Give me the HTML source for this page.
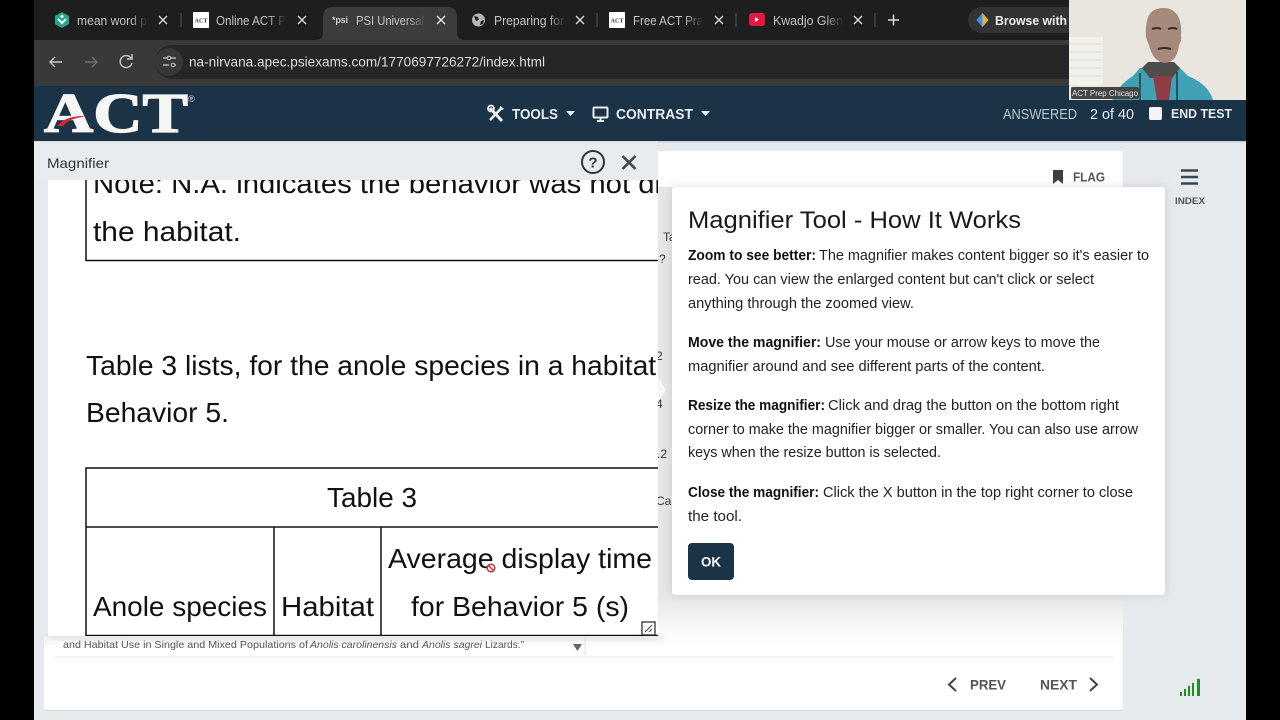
<!DOCTYPE html>
<html lang="en"><head><meta charset="utf-8"><title>ACT Magnifier</title>
<style>
html,body{margin:0;padding:0;background:#000;width:1280px;height:720px;overflow:hidden}
svg{display:block}
text{font-family:"Liberation Sans",sans-serif;white-space:pre}
.d{font-size:14.5px;fill:#222}
.b{font-size:14.5px;fill:#111;font-weight:bold}
.m{font-size:28px;fill:#111}
.t{font-size:12.5px;fill:#c4c4c4}
.x{stroke:#ddd;stroke-width:1.3;fill:none}
.sep{stroke:#444;stroke-width:1.5}
.f{font-size:10.5px;fill:#555}
.n{font-size:14px;font-weight:bold;fill:#555}
.h{font-size:14.5px;font-weight:bold;fill:#e8edf0}
</style></head><body>
<svg width="1280" height="720" viewBox="0 0 1280 720" xmlns="http://www.w3.org/2000/svg">
<defs>
<clipPath id="mag"><rect x="48" y="180" width="610" height="456"/></clipPath>
<filter id="sh" x="-10%" y="-10%" width="120%" height="120%"><feGaussianBlur stdDeviation="5"/></filter>
<linearGradient id="fade" x1="0" x2="1"><stop offset="0" stop-color="#1e1e1e" stop-opacity="0"/><stop offset="1" stop-color="#1e1e1e"/></linearGradient>
<linearGradient id="fadeA" x1="0" x2="1"><stop offset="0" stop-color="#3c3c3c" stop-opacity="0"/><stop offset="1" stop-color="#3c3c3c"/></linearGradient>
<linearGradient id="under" x1="0" x2="0" y1="0" y2="1"><stop offset="0" stop-color="#e6e7e8"/><stop offset="1" stop-color="#fff"/></linearGradient>
</defs>
<rect width="1280" height="720" fill="#000"/>
<!-- tab strip -->
<rect x="34" y="0" width="1212" height="40" fill="#1e1e1e"/>
<path d="M315 40q8 0 8-8V17q0-10 10-10h114q10 0 10 10v15q0 8 8 8z" fill="#3c3c3c"/>
<!-- tab 1 -->
<path d="M62 12l7 4v8l-7 4-7-4v-8z" fill="#1fa88a"/><path d="M58 19l4 4 4-4" stroke="#fff" stroke-width="2" fill="none"/><circle cx="62" cy="16.500" r="1.500" fill="#fff"/>
<text class="t" x="77" y="25" textLength="70" lengthAdjust="spacingAndGlyphs">mean word p</text>
<rect x="130" y="8" width="18" height="24" fill="url(#fade)"/>
<path class="x" d="M159 16l8 8m0-8l-8 8"/><line class="sep" x1="181" y1="13" x2="181" y2="27"/>
<!-- tab 2 -->
<rect x="193" y="12" width="16" height="16" fill="#fff"/><text x="194.500" y="22.500" font-size="6" font-weight="bold" fill="#1b3347" style="font-family:'Liberation Serif',serif" textLength="13">ACT</text>
<text class="t" x="216" y="25" textLength="70" lengthAdjust="spacingAndGlyphs">Online ACT P</text>
<rect x="268" y="8" width="18" height="24" fill="url(#fade)"/>
<path class="x" d="M298 16l8 8m0-8l-8 8"/>
<!-- tab 3 -->
<text x="332" y="23" font-size="9" font-weight="bold" fill="#ccc" textLength="16">*psi</text>
<text class="t" x="356" y="25" fill="#ddd" textLength="68" lengthAdjust="spacingAndGlyphs">PSI Universal</text>
<rect x="408" y="8" width="18" height="24" fill="url(#fadeA)"/>
<path class="x" d="M437 16l8 8m0-8l-8 8" style="stroke:#eee"/>
<!-- tab 4 -->
<circle cx="478.500" cy="20" r="6.500" fill="#b5b5b5"/><path d="M474 16l4 1 1 3-3 1zM481 21l3-1-1 4-3 1z" fill="#1e1e1e"/>
<text class="t" x="494" y="25" textLength="70" lengthAdjust="spacingAndGlyphs">Preparing for</text>
<rect x="548" y="8" width="18" height="24" fill="url(#fade)"/>
<path class="x" d="M576 16l8 8m0-8l-8 8"/><line class="sep" x1="597" y1="13" x2="597" y2="27"/>
<!-- tab 5 -->
<rect x="609" y="12" width="16" height="16" fill="#fff"/><text x="610.500" y="22.500" font-size="6" font-weight="bold" fill="#1b3347" style="font-family:'Liberation Serif',serif" textLength="13">ACT</text>
<text class="t" x="633" y="25" textLength="70" lengthAdjust="spacingAndGlyphs">Free ACT Pra</text>
<rect x="685" y="8" width="18" height="24" fill="url(#fade)"/>
<path class="x" d="M715 16l8 8m0-8l-8 8"/><line class="sep" x1="736" y1="13" x2="736" y2="27"/>
<!-- tab 6 -->
<rect x="749" y="13" width="16" height="13" rx="3" fill="#e8173f"/><path d="M755 17l4 2.500-4 2.500z" fill="#fff"/>
<text class="t" x="773" y="25" textLength="70" lengthAdjust="spacingAndGlyphs">Kwadjo Glen</text>
<rect x="825" y="8" width="18" height="24" fill="url(#fade)"/>
<path class="x" d="M854 16l8 8m0-8l-8 8"/><line class="sep" x1="875" y1="13" x2="875" y2="27"/>
<path d="M893.500 14.500v11M888 20h11" stroke="#ddd" stroke-width="1.500"/>
<!-- browse with -->
<rect x="968" y="7" width="110" height="26" rx="13" fill="#333"/>
<path d="M982.500 13l3 7-3 7-6-7z" fill="#3f8fe8"/><path d="M982.500 13l6 7-6 7z" fill="#e8b23f"/>
<text x="995" y="25" font-size="12.500" fill="#eee" font-weight="bold" textLength="72" lengthAdjust="spacingAndGlyphs">Browse with</text>
<!-- toolbar -->
<rect x="34" y="40" width="1212" height="46" fill="#393939"/>
<path d="M62 62H50m5-5l-5 5 5 5" stroke="#c8c8c8" stroke-width="1.400" fill="none"/>
<path d="M85 62h12m-5-5l5 5-5 5" stroke="#707070" stroke-width="1.400" fill="none"/>
<path d="M131 58a6 6 0 1 0 1 5M132 54v5h-5" stroke="#c8c8c8" stroke-width="1.400" fill="none"/>
<rect x="155" y="45" width="1000" height="34" rx="17" fill="#262626"/>
<circle cx="169" cy="62" r="14" fill="#383838"/>
<path d="M163 58h4m4 0h5M163 65h6m6 0h1" stroke="#ccc" stroke-width="1.300"/><circle cx="169" cy="58" r="1.800" fill="none" stroke="#ccc"/><circle cx="173" cy="65" r="1.800" fill="none" stroke="#ccc"/>
<text x="189" y="66.500" font-size="13.500" fill="#ddd" textLength="356" lengthAdjust="spacingAndGlyphs">na-nirvana.apec.psiexams.com/1770697726272/index.html</text>
<!-- header -->
<rect x="34" y="86" width="1212" height="55" fill="#1b3347"/>
<text x="44" y="132" font-size="56" font-weight="bold" fill="#f6f6f4" stroke="#f6f6f4" stroke-width="1.300" style="font-family:'Liberation Serif',serif" textLength="144" lengthAdjust="spacingAndGlyphs">ACT</text>
<path d="M57 126q8-10 27-10-1 1-1 1-13 1-20 9z" fill="#d8232a"/>
<text x="188" y="102" font-size="9" fill="#ddd">®</text>
<path d="M490 108l12 13" stroke="#eef2f4" stroke-width="3"/><path d="M502 107.500l-12 12.500" stroke="#eef2f4" stroke-width="2.500"/><circle cx="491" cy="108.500" r="3" fill="none" stroke="#eef2f4" stroke-width="1.800"/><path d="M500.500 106l3.500 3-2 1-2.500-2z" fill="#eef2f4"/>
<text class="h" x="512" y="119" textLength="46" lengthAdjust="spacingAndGlyphs">TOOLS</text>
<path d="M566 111h9l-4.500 5z" fill="#e8edf0"/>
<rect x="593.500" y="107.500" width="14" height="10" rx="1" fill="none" stroke="#e8edf0" stroke-width="2"/><path d="M597 121h7M600.500 118v3" stroke="#e8edf0" stroke-width="2"/>
<text class="h" x="616" y="119" textLength="77" lengthAdjust="spacingAndGlyphs">CONTRAST</text>
<path d="M701 111h9l-4.500 5z" fill="#e8edf0"/>
<text x="1003" y="119" font-size="14.500" fill="#bcc5cc" textLength="74" lengthAdjust="spacingAndGlyphs">ANSWERED</text>
<text x="1090" y="119" font-size="14.500" fill="#e8edf0" textLength="44" lengthAdjust="spacingAndGlyphs">2 of 40</text>
<rect x="1149" y="107" width="13" height="13" rx="2" fill="#f2f4f5"/>
<text x="1171" y="118" font-size="13" font-weight="bold" fill="#e8edf0" textLength="61" lengthAdjust="spacingAndGlyphs">END TEST</text>
<!-- body -->
<rect x="34" y="141" width="1212" height="579" fill="#e7eaed"/>
<rect x="34" y="141" width="1212" height="1.500" fill="#c9d0d6"/>
<rect x="44" y="151" width="1079" height="559" fill="#fff"/>
<rect x="44" y="710" width="1079" height="1" fill="#d6d9dc"/>
<rect x="658" y="187" width="16" height="408" fill="#e4e6e9"/>
<path d="M658 377l8 13-8 13z" fill="#f6f7f8"/>
<g font-size="12" fill="#333">
<text x="663" y="241">Ta</text><text x="659" y="263">?</text><text x="656" y="360">2</text><text x="656" y="408">4</text><text x="657" y="458">.2</text><text x="656" y="505">Car</text>
</g>
<rect x="658" y="595" width="465" height="50" fill="url(#under)"/>
<rect x="44" y="636" width="620" height="12" fill="url(#under)" opacity=".6"/>
<!-- flag / index -->
<path d="M1053 170h10v14l-5-4-5 4z" fill="#3a3f44"/>
<text x="1073" y="181.500" font-size="13" font-weight="bold" fill="#555" textLength="32" lengthAdjust="spacingAndGlyphs">FLAG</text>
<path d="M1181 170.500h17M1181 177h17M1181 183.500h17" stroke="#3a4650" stroke-width="2.600"/>
<text x="1175" y="204" font-size="9.500" font-weight="bold" fill="#555" textLength="30" lengthAdjust="spacingAndGlyphs">INDEX</text>
<!-- footer -->
<text class="f" x="63" y="648" textLength="245" lengthAdjust="spacingAndGlyphs">and Habitat Use in Single and Mixed Populations of</text>
<text class="f" x="310" y="648" font-style="italic" textLength="87" lengthAdjust="spacingAndGlyphs">Anolis carolinensis</text>
<text class="f" x="400" y="648" textLength="19" lengthAdjust="spacingAndGlyphs">and</text>
<text class="f" x="422" y="648" font-style="italic" textLength="60" lengthAdjust="spacingAndGlyphs">Anolis sagrei</text>
<text class="f" x="485" y="648" textLength="39" lengthAdjust="spacingAndGlyphs">Lizards.”</text>
<path d="M573 644h9l-4.500 7z" fill="#666"/>
<line x1="585" y1="638" x2="585" y2="655" stroke="#e2e2e2"/>
<line x1="55" y1="657" x2="1114" y2="657" stroke="#e6e6e6"/>
<path d="M956 678l-7 6.500 7 6.500" stroke="#444" stroke-width="2" fill="none"/>
<text class="n" x="970" y="689.500" textLength="36" lengthAdjust="spacingAndGlyphs">PREV</text>
<text class="n" x="1040" y="689.500" textLength="37" lengthAdjust="spacingAndGlyphs">NEXT</text>
<path d="M1090 678l7 6.500-7 6.500" stroke="#444" stroke-width="2" fill="none"/>
<g fill="#1f8f24"><rect x="1180" y="692" width="2" height="4"/><rect x="1184" y="689" width="2" height="7"/><rect x="1188" y="686" width="2" height="10"/><rect x="1192" y="683" width="2" height="13"/><rect x="1197" y="679" width="3" height="17"/></g>
<!-- magnifier -->
<rect x="34" y="141.500" width="624" height="39" fill="#e9ecee"/>
<rect x="34" y="180" width="14" height="456" fill="#e7eaed"/>
<rect x="48" y="634" width="610" height="6" fill="#888" opacity=".2" filter="url(#sh)"/>
<rect x="48" y="180" width="610" height="456" fill="#fff"/>
<text x="47" y="168" font-size="14" fill="#333" textLength="62" lengthAdjust="spacingAndGlyphs">Magnifier</text>
<circle cx="593" cy="162" r="11" fill="none" stroke="#333" stroke-width="2"/>
<text x="593" y="167.500" font-size="15" font-weight="bold" fill="#333" text-anchor="middle">?</text>
<path d="M622.500 156l13 13m0-13l-13 13" stroke="#444" stroke-width="2.600"/>
<g clip-path="url(#mag)">
<text class="m" x="93" y="193" textLength="568" lengthAdjust="spacingAndGlyphs">Note: N.A. indicates the behavior was not di</text>
<text class="m" x="93" y="241" textLength="148" lengthAdjust="spacingAndGlyphs">the habitat.</text>
<path d="M86 180v80.500h572" fill="none" stroke="#111" stroke-width="1.500"/>
<text class="m" x="86" y="375" textLength="578" lengthAdjust="spacingAndGlyphs">Table 3 lists, for the anole species in a habitat,</text>
<text class="m" x="86" y="422" textLength="143" lengthAdjust="spacingAndGlyphs">Behavior 5.</text>
<path d="M658 468H86v168M86 527h572M274 527v109M381 527v109M86 635.500h572" fill="none" stroke="#111" stroke-width="1.500"/>
<text class="m" x="327" y="507" textLength="90" lengthAdjust="spacingAndGlyphs">Table 3</text>
<text class="m" x="388" y="568" textLength="264" lengthAdjust="spacingAndGlyphs">Average display time</text>
<text class="m" x="411" y="616" textLength="218" lengthAdjust="spacingAndGlyphs">for Behavior 5 (s)</text>
<text class="m" x="93" y="616" textLength="174" lengthAdjust="spacingAndGlyphs">Anole species</text>
<text class="m" x="281" y="616" textLength="93" lengthAdjust="spacingAndGlyphs">Habitat</text>
</g>
<rect x="642" y="622" width="13" height="13" fill="#fff" stroke="#222" stroke-width="1.200"/>
<path d="M645 632l7-7M649 632l3-3" stroke="#444"/>
<circle cx="491" cy="568" r="3.800" fill="#fff" stroke="#c4333c" stroke-width="1.500"/><path d="M488.500 565.500l5 5" stroke="#c4333c" stroke-width="1.500"/>
<!-- dialog -->
<rect x="672" y="187" width="493" height="408" fill="#999" opacity=".35" filter="url(#sh)"/>
<rect x="672" y="187" width="493" height="408" rx="3" fill="#fff"/>
<text x="688" y="228" font-size="24" fill="#1a1a1a" textLength="333" lengthAdjust="spacingAndGlyphs">Magnifier Tool - How It Works</text>
<text class="b" x="688" y="260" textLength="128" lengthAdjust="spacingAndGlyphs">Zoom to see better:</text>
<text class="d" x="819" y="260" textLength="330" lengthAdjust="spacingAndGlyphs">The magnifier makes content bigger so it's easier to</text>
<text class="d" x="688" y="284" textLength="406" lengthAdjust="spacingAndGlyphs">read. You can view the enlarged content but can't click or select</text>
<text class="d" x="688" y="308" textLength="226" lengthAdjust="spacingAndGlyphs">anything through the zoomed view.</text>
<text class="b" x="688" y="347" textLength="133" lengthAdjust="spacingAndGlyphs">Move the magnifier:</text>
<text class="d" x="825" y="347" textLength="275" lengthAdjust="spacingAndGlyphs">Use your mouse or arrow keys to move the</text>
<text class="d" x="688" y="371" textLength="357" lengthAdjust="spacingAndGlyphs">magnifier around and see different parts of the content.</text>
<text class="b" x="688" y="410" textLength="137" lengthAdjust="spacingAndGlyphs">Resize the magnifier:</text>
<text class="d" x="828" y="410" textLength="291" lengthAdjust="spacingAndGlyphs">Click and drag the button on the bottom right</text>
<text class="d" x="688" y="434" textLength="450" lengthAdjust="spacingAndGlyphs">corner to make the magnifier bigger or smaller. You can also use arrow</text>
<text class="d" x="688" y="457" textLength="253" lengthAdjust="spacingAndGlyphs">keys when the resize button is selected.</text>
<text class="b" x="688" y="497" textLength="131" lengthAdjust="spacingAndGlyphs">Close the magnifier:</text>
<text class="d" x="823" y="497" textLength="310" lengthAdjust="spacingAndGlyphs">Click the X button in the top right corner to close</text>
<text class="d" x="688" y="521" textLength="54" lengthAdjust="spacingAndGlyphs">the tool.</text>
<rect x="688" y="543" width="46" height="37" rx="4" fill="#1b3347"/>
<text x="701" y="566.500" font-size="14" font-weight="bold" fill="#fff" textLength="20" lengthAdjust="spacingAndGlyphs">OK</text>
<!-- webcam -->
<rect x="1069" y="0" width="177" height="100" fill="#e8e6de"/>
<rect x="1069" y="37" width="34" height="48" fill="#f3f1eb"/>
<path d="M1069 44h34M1069 52h34M1069 60h34M1069 68h34M1069 76h34" stroke="#dddbd3"/>
<path d="M1113 100q4-14 20-24l7-8h40l8 8q20 8 25 24z" fill="#3fa0b6"/>
<path d="M1142 68l6-6h26l6 6-8 10h-22z" fill="#4c4c4a"/>
<path d="M1153 76h19l-3 24h-12z" fill="#8e3d44"/>
<path d="M1164 8q-12 0-16 9-3 9-2 20 1 4 3 8 4 17 16 18 12-1 14-18 3-5 2-9 1-12-3-20-5-8-14-8z" fill="#a5897a"/>
<path d="M1152 29q6-2 9 0M1168 29q5-2 9 0M1158 49q6-2 13 0" stroke="#3b2c26" stroke-width="2" fill="none"/>
<path d="M1140 73v27M1177 72v28" stroke="#1e3a44" stroke-width="1.500"/>
<rect x="1071" y="87" width="68" height="12" rx="2" fill="#444"/>
<text x="1072" y="96" font-size="8.500" fill="#e8e8e8" textLength="66" lengthAdjust="spacingAndGlyphs">ACT Prep Chicago</text>
<rect x="1246" y="0" width="34" height="720" fill="#000"/>
</svg>
</body></html>
